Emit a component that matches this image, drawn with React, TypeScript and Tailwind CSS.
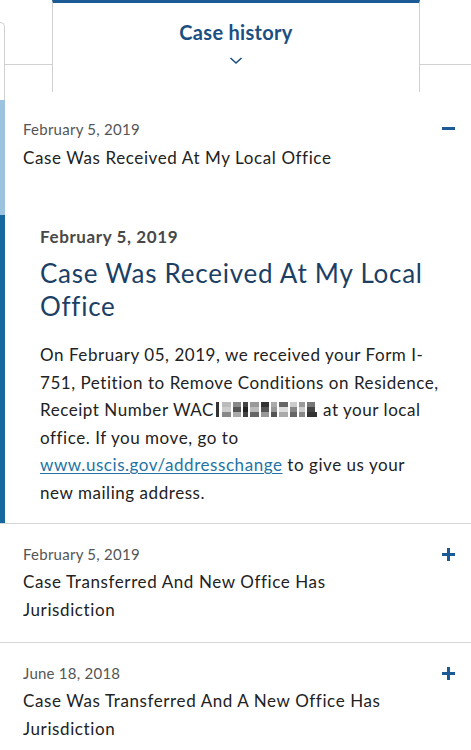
import React from 'react';

const FONT = "font-['Lato','Open_Sans',sans-serif]";

// blurred-out receipt number, drawn as grey pixel blocks
function Redacted() {
  const cells = [
    [0, 2, 3, '#333'], [6, 2, 9, '#bbb'], [17, 2, 8, '#888'], [27, 2, 5, '#444'], [34, 2, 9, '#999'],
    [45, 2, 8, '#333'], [55, 2, 6, '#aaa'], [63, 2, 9, '#666'], [74, 2, 7, '#ccc'], [83, 2, 6, '#999'], [91, 2, 8, '#777'],
    [0, 7, 3, '#333'], [6, 7, 9, '#ccc'], [17, 7, 8, '#555'], [27, 7, 5, '#222'], [34, 7, 9, '#bbb'],
    [45, 7, 8, '#555'], [55, 7, 6, '#999'], [63, 7, 9, '#ddd'], [74, 7, 7, '#888'], [83, 7, 6, '#ccc'], [91, 7, 8, '#444'],
    [0, 12, 3, '#333'], [6, 12, 9, '#888'], [17, 12, 8, '#aaa'], [27, 12, 5, '#444'], [34, 12, 9, '#666'],
    [45, 12, 8, '#999'], [55, 12, 6, '#555'], [63, 12, 9, '#aaa'], [74, 12, 7, '#666'], [83, 12, 6, '#888'], [91, 12, 10, '#333'],
  ] as const;
  return (
    <svg width="104" height="18" viewBox="0 0 104 18" className="inline-block align-[-2px] ml-[2px] mr-[3px]">
      {cells.map(([x, y, w, c], i) => (
        <rect key={i} x={x} y={y} width={w} height={5} fill={c} />
      ))}
    </svg>
  );
}

function PlusIcon() {
  return (
    <svg width="13" height="13" viewBox="0 0 13 13">
      <rect x="0" y="5" width="13" height="3" fill="#1b5a95" />
      <rect x="5" y="0" width="3" height="13" fill="#1b5a95" />
    </svg>
  );
}

function MinusIcon() {
  return (
    <svg width="13" height="13" viewBox="0 0 13 13">
      <rect x="0" y="5" width="13" height="3" fill="#1b5a95" />
    </svg>
  );
}

function HistoryItem({ date, title, last }: { date: string; title: React.ReactNode; last?: boolean }) {
  return (
    <div className={`flex pl-[23px] pr-[16px] pt-[20px] pb-[18px] ${last ? '' : 'border-b border-[#d6d6d6]'}`}>
      <div className="flex-1">
        <p className="text-[15px] leading-[20px] tracking-[0.25px] text-[#555]">{date}</p>
        <p className="mt-[4px] text-[17px] leading-[28px] tracking-[0.6px] text-[#222]">{title}</p>
      </div>
      <div className="pt-[4px]">
        <PlusIcon />
      </div>
    </div>
  );
}

export default function App() {
  return (
    <div className={`w-[471px] h-[750px] overflow-hidden bg-white ${FONT}`}>
      {/* tabs */}
      <div className="flex h-[100px]">
        <div className="w-[52px] flex flex-col">
          <div className="h-[22px]" />
          <div className="flex-1 flex">
            <div className="w-[5px] border-t border-r border-[#d0d0d0] rounded-tr-[6px]" />
            <div className="flex-1 h-[43px] border-b border-[#d0d0d0]" />
          </div>
        </div>
        <div className="w-[368px] h-[92px] border-t-[3px] border-t-[#1b5a95] border-x border-x-[#d0d0d0] flex flex-col items-center">
          <h2 className="mt-[16px] text-[20px] leading-[26px] font-bold tracking-[0.3px] text-[#1b4f82]">Case history</h2>
          <svg width="14" height="9" viewBox="0 0 14 9" className="mt-[11px]">
            <path d="M1.5 2 L7 7 L12.5 2" fill="none" stroke="#1b4f82" strokeWidth="1.6" />
          </svg>
        </div>
        <div className="flex-1 h-[65px] border-b border-[#d0d0d0]" />
      </div>

      {/* expanded item */}
      <div className="flex border-b border-[#d6d6d6]">
        <div className="w-[5px] flex flex-col">
          <div className="h-[115px] bg-[#9dc4de]" />
          <div className="flex-1 bg-[#16679f]" />
        </div>
        <div className="flex-1">
          <div className="flex pl-[18px] pr-[16px] pt-[19px]">
            <div className="flex-1">
              <p className="text-[15px] leading-[20px] tracking-[0.25px] text-[#555]">February 5, 2019</p>
              <p className="mt-[5px] text-[17px] leading-[28px] tracking-[0.6px] text-[#222]">Case Was Received At My Local Office</p>
            </div>
            <div className="pt-[3px]">
              <MinusIcon />
            </div>
          </div>
          <div className="pl-[35px] pr-[10px] pb-[17px]">
            <p className="mt-[53px] text-[17px] leading-[24px] font-bold tracking-[0.6px] text-[#484848]">February 5, 2019</p>
            <h3 className="mt-[8px] text-[26px] leading-[33px] tracking-[0.75px] text-[#1c3f66]">
              Case Was Received At My Local
              <br />
              Office
            </h3>
            <p className="mt-[18px] text-[17px] leading-[27.5px] tracking-[0.55px] text-[#222] whitespace-nowrap">
              On February 05, 2019, we received your Form I-
              <br />
              751, Petition to Remove Conditions on Residence,
              <br />
              Receipt Number WAC<Redacted />at your local
              <br />
              office. If you move, go to
              <br />
              <a href="#" className="text-[#2374a5] underline underline-offset-2">www.uscis.gov/addresschange</a> to give us your
              <br />
              new mailing address.
            </p>
          </div>
        </div>
      </div>

      <HistoryItem
        date="February 5, 2019"
        title={<>Case Transferred And New Office Has<br />Jurisdiction</>}
      />
      <HistoryItem
        date="June 18, 2018"
        title={<>Case Was Transferred And A New Office Has<br />Jurisdiction</>}
        last
      />
    </div>
  );
}
